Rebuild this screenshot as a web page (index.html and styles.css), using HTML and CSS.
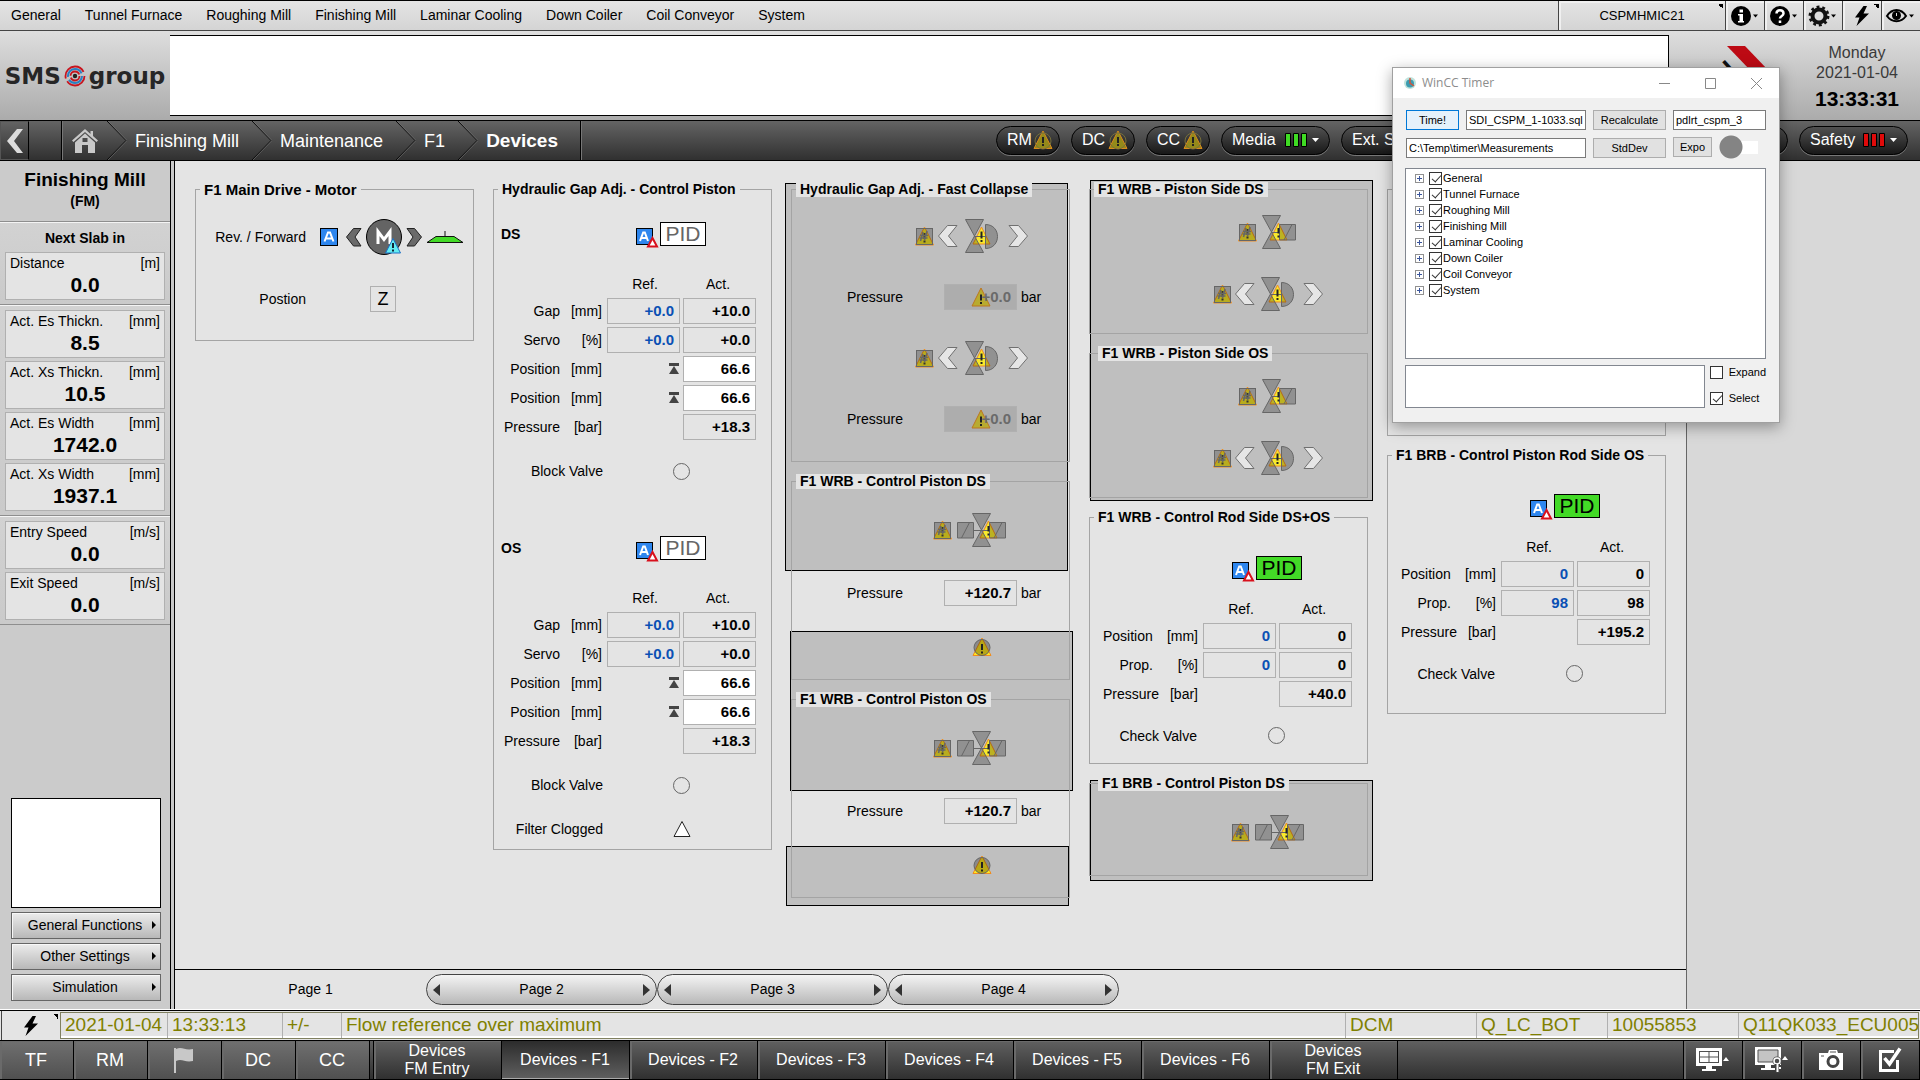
FILE: index.html
```html
<!DOCTYPE html>
<html lang="en">
<head>
<meta charset="utf-8">
<title>Finishing Mill - F1 Devices</title>
<link rel="stylesheet" href="styles.css">
</head>
<body>
<svg class="defs" aria-hidden="true">
  <symbol id="auto" viewBox="0 0 18 18"><rect x=".5" y=".5" width="17" height="17" fill="#2e86ee" stroke="#000"/><path d="M4.5 13.5 8 4.5h2l3.500 9M6 10.500h6" fill="none" stroke="#fff" stroke-width="2"/></symbol>
  <symbol id="auto-limit" viewBox="0 0 24 30"><rect x=".5" y="9.500" width="16" height="16" fill="#2e86ee" stroke="#000"/><path d="M4 22 7.200 13.500h1.600L12 22M5.500 19h5" fill="none" stroke="#fff" stroke-width="2"/><path d="M16.500 19 21 27.500h-9z" fill="#fff" stroke="#d8101c" stroke-width="2"/></symbol>
  <symbol id="limit-top" viewBox="0 0 10 11"><path d="M0 0h10v3H0zM5 3l5 8H0z" fill="#444"/></symbol>
  <symbol id="lock" viewBox="0 0 19 20"><path d="M9.500 1 18.500 19H.5z" fill="#f2e327" stroke="#f08c1e"/><rect x="1.500" y="2.500" width="16" height="16" fill="#000" fill-opacity=".24" stroke="#666"/><path d="M9.500 7v6M9.500 14.500v2" stroke="#333" stroke-width="2"/><path d="M8 6 5.500 15M12 5 9.500 14M5 9.500h8M4.500 12h8" stroke="#666" stroke-width="1.500"/></symbol>
  <symbol id="chev-l" viewBox="0 0 20 22"><path d="M9.500.5h9.500L10.500 11l8.500 10.500H9.500L.5 11z" fill="#e6e6e6" stroke="#707070"/></symbol>
  <symbol id="chev-r" viewBox="0 0 20 22"><path d="M10.500.5H1L9.500 11 1 21.500h9.500l9-10.500z" fill="#e6e6e6" stroke="#707070"/></symbol>
  <symbol id="valve-d" viewBox="0 0 34 34"><path d="M16.500 8 25 25H8z" fill="#f8ea2c" stroke="#f08c1e"/><path d="M.5.5h18l-9 16.500 9 16.500H.5l9-16.500zM20.500 5.500c16 0 16 24 0 24z" fill="#000" fill-opacity=".24" stroke="#666"/><path d="M9.500 17.500h11" stroke="#666"/><path d="M16.500 12.500v7M16.500 21v2" stroke="#222" stroke-width="2"/></symbol>
  <symbol id="valve-b" viewBox="0 0 34 34"><path d="M16.500 8 25 25H8z" fill="#f8ea2c" stroke="#f08c1e"/><path d="M.5.5h18l-9 16.500 9 16.500H.5l9-16.500zM17.500 9.500h16v15.500h-16z" fill="#000" fill-opacity=".24" stroke="#666"/><path d="M9.500 17.500h8M22 25l8-15.500" stroke="#666" fill="none"/><path d="M16.500 13v5.500M16.500 20.500v2" stroke="#222" stroke-width="2"/></symbol>
  <symbol id="valve-x" viewBox="0 0 49 34"><path d="M31.500 8 40 25H23z" fill="#f8ea2c" stroke="#f08c1e"/><path d="M15.500.5h18l-9 16.500 9 16.500h-18l9-16.500zM.5 9.500h16v15.500H.5zM32.500 9.500h16v15.500h-16z" fill="#000" fill-opacity=".24" stroke="#666"/><path d="M16.500 17.500h16M4.500 25l8-15.500M37 25l8-15.500" stroke="#666" fill="none"/><path d="M31.500 13v5.500M31.500 20.500v2" stroke="#222" stroke-width="2"/></symbol>
  <symbol id="warn-c" viewBox="0 0 20 20"><path d="M10 1 19 18.500H1z" fill="#ffe81f" stroke="#f08c1e"/><circle cx="10" cy="10.500" r="8" fill="#000" fill-opacity=".28" stroke="#666"/><path d="M10 7v6M10 14.500v2" stroke="#222" stroke-width="2"/></symbol>
  <symbol id="warn" viewBox="0 0 20 20"><path d="M10 1 19 19H1z" fill="#b8ab30" stroke="#bd7620"/><path d="M10 7.500v6M10 15v2" stroke="#222" stroke-width="2"/></symbol>
  <symbol id="warn-nav" viewBox="0 0 20 20"><path d="M10 1 19 18.500H1z" fill="#948a1a" stroke="#d98a1c"/><circle cx="10" cy="11" r="8" fill="none" stroke="#776f3a"/><path d="M10 7v6M10 14v2" stroke="#222" stroke-width="2"/></symbol>
  <symbol id="sep" viewBox="0 0 20 39"><path d="M0 0 19 19.500 0 39" fill="none" stroke="#0a0a0a"/><path d="M1 0 20 19.500 1 39" fill="none" stroke="#777" stroke-width=".6"/></symbol>
  <symbol id="bolt" viewBox="0 0 16 20"><path d="M9.500 0 1 11.500h4.500L2.500 20 15 7.500H9.500L13 0z" fill="#000"/></symbol>
</svg>

<div class="app">
  <header class="menubar">
    <nav class="menu">
      <a href="#">General</a><a href="#">Tunnel Furnace</a><a href="#">Roughing Mill</a><a href="#">Finishing Mill</a><a href="#">Laminar Cooling</a><a href="#">Down Coiler</a><a href="#">Coil Conveyor</a><a href="#">System</a>
    </nav>
    <button class="tool tool--host corner">CSPMHMIC21</button>
    <button class="tool" aria-label="Info"><svg width="30" height="22" viewBox="0 0 30 22"><circle cx="11" cy="11" r="10"/><path d="M8 9h5v7h1v1.500H8V16h1.500v-5.500H8zM9.500 4.500h3.500v3H9.500z" fill="#fff"/><path d="M23 9.500h5l-2.500 3z"/></svg></button>
    <button class="tool" aria-label="Help"><svg width="30" height="22" viewBox="0 0 30 22"><circle cx="11" cy="11" r="10"/><path d="M7.500 8.500c0-4.500 7-4.500 7 0 0 2.500-3.500 2.500-3.500 5M11 15.500v2.500" fill="none" stroke="#fff" stroke-width="2.500"/><path d="M23 9.500h5l-2.500 3z"/></svg></button>
    <button class="tool" aria-label="Settings"><svg width="30" height="22" viewBox="0 0 30 22"><circle cx="11" cy="11" r="6.500" fill="#ddd" stroke="#111" stroke-width="4"/><circle cx="11" cy="11" r="9.200" fill="none" stroke="#111" stroke-width="2.500" stroke-dasharray="2.900 2.900"/><path d="M23 9.500h5l-2.500 3z"/></svg></button>
    <button class="tool corner" aria-label="Alarms"><svg width="16" height="20"><use href="#bolt"/></svg></button>
    <button class="tool" aria-label="View"><svg width="30" height="22" viewBox="0 0 30 22"><path d="M1 11c5-8 14-8 19 0-5 7-14 7-19 0z" fill="#ddd" stroke="#000" stroke-width="2"/><circle cx="10.500" cy="10.500" r="4.500"/><path d="M10.500 8v3" stroke="#ddd"/><path d="M23 9.500h5l-2.500 3z"/></svg></button>
  </header>

  <div class="banner">
    <div class="logo"><span>SMS</span><svg width="22" height="22" viewBox="0 0 22 22" fill="none"><circle cx="11" cy="11" r="9.500" stroke="#c8141e" stroke-width="1.800" stroke-dasharray="24 3 28 4.700"/><circle cx="11" cy="11" r="7" stroke="#2b7fc2" stroke-width="2" stroke-dasharray="18 3 20 3"/><circle cx="11" cy="11" r="4.500" stroke="#c8141e" stroke-width="1.800" stroke-dasharray="12 2 12 2"/><circle cx="11" cy="11" r="2.200" fill="#222"/></svg><span>group</span></div>
    <div class="message"></div>
    <div class="brand"><svg width="60" height="64" viewBox="0 0 60 64"><path d="M18 1h18l23 24H41z" fill="#bd0a14"/><text x="-14" y="40" transform="rotate(-42 10 30)" font-family="Liberation Sans, sans-serif" font-weight="700" font-size="25" fill="#111">DnI</text></svg></div>
    <div class="clock"><span>Monday</span><span>2021-01-04</span><strong>13:33:31</strong></div>
  </div>

  <div class="pathbar">
    <button class="back" aria-label="Back"><svg width="20" height="26" viewBox="0 0 20 26"><path d="M12 1h6L9 13l9 12h-6L2 13z" fill="#dcdcdc"/></svg></button>
    <span class="spare"></span>
    <nav class="crumbs">
      <a class="home" href="#" aria-label="Home"><svg width="26" height="26" viewBox="0 0 26 26" fill="#c9c9c9"><path d="M13 1 0 12.500 1.500 14 13 4l11.500 10L26 12.500 21 8V3h-2.500v3z"/><path d="M13 5.500 3 14.500V25h7v-8h6v8h7V14.500z"/><path d="M10.500 10h5v4h-5z" fill="#4a4a4a"/></svg></a>
      <svg width="20" height="39"><use href="#sep"/></svg><a href="#">Finishing Mill</a>
      <svg width="20" height="39"><use href="#sep"/></svg><a href="#">Maintenance</a>
      <svg width="20" height="39"><use href="#sep"/></svg><a href="#">F1</a>
      <svg width="20" height="39"><use href="#sep"/></svg><a class="here" href="#">Devices</a>
    </nav>
    <div class="pills">
      <button class="pill">RM<svg width="20" height="20"><use href="#warn-nav"/></svg></button>
      <button class="pill">DC<svg width="20" height="20"><use href="#warn-nav"/></svg></button>
      <button class="pill">CC<svg width="20" height="20"><use href="#warn-nav"/></svg></button>
      <button class="pill pill--wide">Media<svg width="34" height="14" viewBox="0 0 34 14"><g fill="#3fdc23" stroke="#000"><path d="M.5.500h5v13h-5zM8.500.500h5v13h-5zM16.500.500h5v13h-5z"/></g><path d="M27 5h7l-3.500 4z" fill="#fff"/></svg></button>
      <button class="pill pill--long">Ext. Systems</button>
      <button class="pill pill--wide">Safety<svg width="34" height="14" viewBox="0 0 34 14"><g fill="#e00a0a" stroke="#000"><path d="M.5.500h5v13h-5zM8.500.500h5v13h-5zM16.500.500h5v13h-5z"/></g><path d="M27 5h7l-3.500 4z" fill="#fff"/></svg></button>
    </div>
  </div>

  <div class="body">
    <aside class="side">
      <div class="side-title"><h1>Finishing Mill</h1><p>(FM)</p></div>
      <div class="side-sec"><h2>Next Slab in</h2>
        <div class="fig"><span>Distance</span><span>[m]</span><strong>0.0</strong></div>
      </div>
      <div class="side-sec">
        <div class="fig"><span>Act. Es Thickn.</span><span>[mm]</span><strong>8.5</strong></div>
        <div class="fig"><span>Act. Xs Thickn.</span><span>[mm]</span><strong>10.5</strong></div>
        <div class="fig"><span>Act. Es Width</span><span>[mm]</span><strong>1742.0</strong></div>
        <div class="fig"><span>Act. Xs Width</span><span>[mm]</span><strong>1937.1</strong></div>
      </div>
      <div class="side-sec">
        <div class="fig"><span>Entry Speed</span><span>[m/s]</span><strong>0.0</strong></div>
        <div class="fig"><span>Exit Speed</span><span>[m/s]</span><strong>0.0</strong></div>
      </div>
      <div class="side-foot">
        <div class="preview"></div>
        <button class="side-btn">General Functions</button>
        <button class="side-btn">Other Settings</button>
        <button class="side-btn">Simulation</button>
      </div>
    </aside>

    <main class="main">
      <div class="columns">
        <div class="col">
          <section class="group group--motor">
            <h2 class="big">F1 Main Drive - Motor</h2>
            <div class="motor-row"><span class="motor-label">Rev. / Forward</span>
              <svg width="18" height="18"><use href="#auto"/></svg>
              <svg width="80" height="38" viewBox="0 0 80 38"><path d="M9.500 10.500H17L11 19l6 9H9.500L2.500 19zM70.500 10.500H63L69 19l-6 9h7.500L77.500 19z" fill="#6a6a6a" stroke="#222"/><circle cx="40" cy="19" r="17.500" fill="#646464" stroke="#000"/><path d="M34 26V13.500l6 8 6-8V26" fill="none" stroke="#fff" stroke-width="3"/><path d="M49 20.500 56.500 35h-15z" fill="#63ecf2" stroke="#1c6fc4"/><path d="M49 25v5M49 31.500v2" stroke="#123" stroke-width="2"/></svg>
              <svg width="38" height="14" viewBox="0 0 38 14"><path d="M1 12.500 10 6.500h18l9 6z" fill="#43da27" stroke="#111"/><path d="M19 1v6" stroke="#111"/></svg>
            </div>
            <div class="motor-row motor-row--pos"><span class="motor-label">Postion</span><output class="zbox">Z</output></div>
          </section>
        </div>

        <div class="col">
          <section class="group group--gap">
            <h2>Hydraulic Gap Adj. - Control Piston</h2>
            <div class="pid-row"><strong>DS</strong><svg width="24" height="30"><use href="#auto-limit"/></svg><button class="pid">PID</button></div>
            <table class="vals">
              <tr><th></th><th></th><th>Ref.</th><th>Act.</th></tr>
              <tr><td>Gap</td><td>[mm]</td><td><output class="val ref">+0.0</output></td><td><output class="val">+10.0</output></td></tr>
              <tr><td>Servo</td><td>[%]</td><td><output class="val ref">+0.0</output></td><td><output class="val">+0.0</output></td></tr>
              <tr><td>Position</td><td>[mm]</td><td><svg width="10" height="11"><use href="#limit-top"/></svg></td><td><output class="val lit">66.6</output></td></tr>
              <tr><td>Position</td><td>[mm]</td><td><svg width="10" height="11"><use href="#limit-top"/></svg></td><td><output class="val lit">66.6</output></td></tr>
              <tr><td>Pressure</td><td>[bar]</td><td></td><td><output class="val">+18.3</output></td></tr>
            </table>
            <div class="state"><span>Block Valve</span><i class="lamp"></i></div>
            <div class="pid-row pid-row--next"><strong>OS</strong><svg width="24" height="30"><use href="#auto-limit"/></svg><button class="pid">PID</button></div>
            <table class="vals">
              <tr><th></th><th></th><th>Ref.</th><th>Act.</th></tr>
              <tr><td>Gap</td><td>[mm]</td><td><output class="val ref">+0.0</output></td><td><output class="val">+10.0</output></td></tr>
              <tr><td>Servo</td><td>[%]</td><td><output class="val ref">+0.0</output></td><td><output class="val">+0.0</output></td></tr>
              <tr><td>Position</td><td>[mm]</td><td><svg width="10" height="11"><use href="#limit-top"/></svg></td><td><output class="val lit">66.6</output></td></tr>
              <tr><td>Position</td><td>[mm]</td><td><svg width="10" height="11"><use href="#limit-top"/></svg></td><td><output class="val lit">66.6</output></td></tr>
              <tr><td>Pressure</td><td>[bar]</td><td></td><td><output class="val">+18.3</output></td></tr>
            </table>
            <div class="state"><span>Block Valve</span><i class="lamp"></i></div>
            <div class="state state--filter"><span>Filter Clogged</span><svg width="18" height="18" viewBox="0 0 18 18"><path d="M9 1.500 17 16.500H1z" fill="#fff" stroke="#222"/></svg></div>
          </section>
        </div>

        <div class="col">
          <div class="shade shade--collapse"></div><div class="shade shade--mid"></div><div class="shade shade--low"></div>
          <section class="group group--collapse">
            <h2>Hydraulic Gap Adj. - Fast Collapse</h2>
            <div class="dev dev--fast"><svg width="19" height="20"><use href="#lock"/></svg><svg width="20" height="22"><use href="#chev-l"/></svg><svg class="body-d" width="34" height="34"><use href="#valve-d"/></svg><svg width="20" height="22"><use href="#chev-r"/></svg></div>
            <div class="press"><span>Pressure</span><output class="val off"><svg width="20" height="20"><use href="#warn"/></svg>+0.0</output><span>bar</span></div>
            <div class="dev dev--fast"><svg width="19" height="20"><use href="#lock"/></svg><svg width="20" height="22"><use href="#chev-l"/></svg><svg class="body-d" width="34" height="34"><use href="#valve-d"/></svg><svg width="20" height="22"><use href="#chev-r"/></svg></div>
            <div class="press"><span>Pressure</span><output class="val off"><svg width="20" height="20"><use href="#warn"/></svg>+0.0</output><span>bar</span></div>
          </section>
          <section class="group">
            <h2>F1 WRB - Control Piston DS</h2>
            <div class="dev dev--cross"><svg width="19" height="20"><use href="#lock"/></svg><svg width="49" height="34"><use href="#valve-x"/></svg></div>
            <div class="press"><span>Pressure</span><output class="val">+120.7</output><span>bar</span></div>
            <div class="dev dev--warn"><svg width="20" height="20"><use href="#warn-c"/></svg></div>
          </section>
          <section class="group">
            <h2>F1 WRB - Control Piston OS</h2>
            <div class="dev dev--cross"><svg width="19" height="20"><use href="#lock"/></svg><svg width="49" height="34"><use href="#valve-x"/></svg></div>
            <div class="press"><span>Pressure</span><output class="val">+120.7</output><span>bar</span></div>
            <div class="dev dev--warn"><svg width="20" height="20"><use href="#warn-c"/></svg></div>
          </section>
        </div>

        <div class="col">
          <div class="shade shade--piston"></div><div class="shade shade--brb"></div>
          <section class="group group--pair">
            <h2>F1 WRB - Piston Side DS</h2>
            <div class="dev dev--box"><svg width="19" height="20"><use href="#lock"/></svg><svg width="34" height="34"><use href="#valve-b"/></svg></div>
            <div class="dev dev--arrows"><svg width="19" height="20"><use href="#lock"/></svg><svg width="20" height="22"><use href="#chev-l"/></svg><svg class="body-d" width="34" height="34"><use href="#valve-d"/></svg><svg width="20" height="22"><use href="#chev-r"/></svg></div>
          </section>
          <section class="group group--pair">
            <h2 class="inset">F1 WRB - Piston Side OS</h2>
            <div class="dev dev--box"><svg width="19" height="20"><use href="#lock"/></svg><svg width="34" height="34"><use href="#valve-b"/></svg></div>
            <div class="dev dev--arrows"><svg width="19" height="20"><use href="#lock"/></svg><svg width="20" height="22"><use href="#chev-l"/></svg><svg class="body-d" width="34" height="34"><use href="#valve-d"/></svg><svg width="20" height="22"><use href="#chev-r"/></svg></div>
          </section>
          <section class="group">
            <h2>F1 WRB - Control Rod Side DS+OS</h2>
            <div class="pid-row pid-row--low"><strong></strong><svg width="24" height="30"><use href="#auto-limit"/></svg><button class="pid pid--on">PID</button></div>
            <table class="vals vals--left">
              <tr><th></th><th></th><th>Ref.</th><th>Act.</th></tr>
              <tr><td>Position</td><td>[mm]</td><td><output class="val ref">0</output></td><td><output class="val">0</output></td></tr>
              <tr><td class="end">Prop.</td><td>[%]</td><td><output class="val ref">0</output></td><td><output class="val">0</output></td></tr>
              <tr><td>Pressure</td><td>[bar]</td><td></td><td><output class="val">+40.0</output></td></tr>
            </table>
            <div class="state state--check"><span>Check Valve</span><i class="lamp"></i></div>
          </section>
          <section class="group group--brb">
            <h2 class="inset">F1 BRB - Control Piston DS</h2>
            <div class="dev dev--cross"><svg width="19" height="20"><use href="#lock"/></svg><svg width="49" height="34"><use href="#valve-x"/></svg></div>
          </section>
        </div>

        <div class="col">
          <section class="group group--covered"></section>
          <section class="group group--rod">
            <h2>F1 BRB - Control Piston Rod Side OS</h2>
            <div class="pid-row pid-row--low"><strong></strong><svg width="24" height="30"><use href="#auto-limit"/></svg><button class="pid pid--on">PID</button></div>
            <table class="vals vals--left">
              <tr><th></th><th></th><th>Ref.</th><th>Act.</th></tr>
              <tr><td>Position</td><td>[mm]</td><td><output class="val ref">0</output></td><td><output class="val">0</output></td></tr>
              <tr><td class="end">Prop.</td><td>[%]</td><td><output class="val ref">98</output></td><td><output class="val">98</output></td></tr>
              <tr><td>Pressure</td><td>[bar]</td><td></td><td><output class="val">+195.2</output></td></tr>
            </table>
            <div class="state state--check"><span>Check Valve</span><i class="lamp"></i></div>
          </section>
        </div>
      </div>

      <nav class="pager">
        <span class="page">Page 1</span>
        <button class="page page--btn">Page 2</button>
        <button class="page page--btn">Page 3</button>
        <button class="page page--btn">Page 4</button>
      </nav>
    </main>
    <div class="gutter"></div>
  </div>

  <div class="alarm">
    <button class="alarm-btn corner" aria-label="Alarm list"><svg width="16" height="20"><use href="#bolt"/></svg></button>
    <div class="alarm-line">
      <span class="a-date">2021-01-04</span><span class="a-time">13:33:13</span><span class="a-sign">+/-</span><span class="a-text">Flow reference over maximum</span><span class="a-col">DCM</span><span class="a-col">Q_LC_BOT</span><span class="a-col">10055853</span><span class="a-last">Q11QK033_ECU005</span>
    </div>
  </div>

  <nav class="taskbar">
    <div class="areas">
      <button class="task">TF</button><button class="task">RM</button>
      <button class="task" aria-label="Finishing Mill"><svg width="22" height="26" viewBox="0 0 22 26" fill="#c8c8c8"><path d="M1 1h2v25H1zM3 2c6-3 9 2 17 0v12c-8 2-11-3-17 0z"/></svg></button>
      <button class="task">DC</button><button class="task">CC</button>
    </div>
    <div class="pages">
      <button class="task">Devices<br>FM Entry</button>
      <button class="task task--on">Devices - F1</button>
      <button class="task">Devices - F2</button>
      <button class="task">Devices - F3</button>
      <button class="task">Devices - F4</button>
      <button class="task">Devices - F5</button>
      <button class="task">Devices - F6</button>
      <button class="task">Devices<br>FM Exit</button>
    </div>
    <div class="tools">
      <button class="task" aria-label="Screens"><svg width="34" height="24" viewBox="0 0 34 24" fill="#fff"><path d="M0 0h26v18H16v3h4v2H6v-2h4v-3H0z"/><path d="M3 3h20v12H3z" fill="#505050"/><path d="M4 4h8.500v4.500H4zM13.500 4H22v4.500h-8.500zM4 9.500h8.500V14H4zM13.500 9.500H22V14h-8.500zM27 13h6l-3-4z"/></svg></button>
      <button class="task" aria-label="Screen access"><svg width="34" height="26" viewBox="0 0 34 26" fill="#fff"><path d="M0 0h26v18H16v3h4v2H6v-2h4v-3H0z"/><path d="M3 3h20v12H3z" fill="#c4c4c4" stroke="#505050"/><circle cx="22" cy="14" r="4.500" fill="#505050"/><circle cx="22" cy="14" r="3" fill="#505050" stroke="#fff" stroke-width="1.500"/><path d="M20 17h5v9h-4z" fill="#404040"/><path d="M21.500 17h2v8h-2zM24 20h2v2h-2zM27 13h6l-3-4z"/></svg></button>
      <button class="task" aria-label="Snapshot"><svg width="26" height="22" viewBox="0 0 26 22"><path d="M1 4h9l1-3h8l1 3h5v17H1z" fill="#fff"/><path d="M12 3h6M3 7h3" stroke="#505050"/><circle cx="15" cy="12.500" r="5" fill="#fff" stroke="#444" stroke-width="3"/></svg></button>
      <button class="task" aria-label="Confirm"><svg width="26" height="26" viewBox="0 0 26 26" fill="none" stroke="#fff"><path d="M17 4.500H3.500v19h17V13" stroke-width="3"/><path d="M7.500 11l5 6L23 1.500" stroke-width="3.500"/></svg></button>
    </div>
  </nav>
</div>

<div class="window" role="dialog" aria-label="WinCC Timer">
  <div class="titlebar">
    <svg width="14" height="14" viewBox="0 0 14 14"><circle cx="7" cy="7" r="6" fill="#bfe3dc"/><circle cx="7" cy="7.500" r="4" fill="#3c9bb0"/><path d="M7 2v5l4 3" stroke="#d0563c" fill="none" stroke-width="1.500"/></svg>
    <span class="wtitle">WinCC Timer</span>
    <button aria-label="Minimize"><svg width="11" height="11" viewBox="0 0 11 11"><path d="M0 5.500h11" stroke="#888"/></svg></button>
    <button aria-label="Maximize"><svg width="11" height="11" viewBox="0 0 11 11"><path d="M.5.5h10v10H.5z" fill="none" stroke="#888"/></svg></button>
    <button aria-label="Close"><svg width="11" height="11" viewBox="0 0 11 11"><path d="M0 0l11 11M11 0 0 11" stroke="#888"/></svg></button>
  </div>
  <div class="wbody">
    <div class="form">
      <button class="btn btn--focus">Time!</button>
      <input type="text" aria-label="Script" value="SDI_CSPM_1-1033.sql">
      <button class="btn">Recalculate</button>
      <input type="text" aria-label="Project" value="pdlrt_cspm_3">
      <input class="path" type="text" aria-label="Folder" value="C:\Temp\timer\Measurements">
      <button class="btn">StdDev</button>
      <div class="expo"><button class="btn">Expo</button><input class="toggle" type="checkbox" aria-label="Run"></div>
    </div>
    <ul class="tree">
      <li><i class="plus"></i><label><input type="checkbox" checked>General</label></li>
      <li><i class="plus"></i><label><input type="checkbox" checked>Tunnel Furnace</label></li>
      <li><i class="plus"></i><label><input type="checkbox" checked>Roughing Mill</label></li>
      <li><i class="plus"></i><label><input type="checkbox" checked>Finishing Mill</label></li>
      <li><i class="plus"></i><label><input type="checkbox" checked>Laminar Cooling</label></li>
      <li><i class="plus"></i><label><input type="checkbox" checked>Down Coiler</label></li>
      <li><i class="plus"></i><label><input type="checkbox" checked>Coil Conveyor</label></li>
      <li><i class="plus"></i><label><input type="checkbox" checked>System</label></li>
    </ul>
    <div class="wfoot">
      <textarea aria-label="Log"></textarea>
      <div class="opts"><label><input type="checkbox">Expand</label><label><input type="checkbox" checked>Select</label></div>
    </div>
  </div>
</div>
</body>
</html>
```
FILE: styles.css
```css
* { box-sizing: border-box; }
body { margin: 0; font: 14px/16px "Liberation Sans", Arial, sans-serif; color: #000; background: #d8d8d8; }
h1, h2, p { margin: 0; }
a { color: inherit; text-decoration: none; }
button { font: inherit; color: inherit; margin: 0; padding: 0; border: 0; background: none; }
svg { display: block; flex: none; overflow: visible; }
.defs { position: absolute; width: 0; height: 0; }
.app { display: flex; flex-direction: column; min-height: 100vh; overflow: hidden; }

/* small triangle in a button's upper right corner */
.corner { background-image: linear-gradient(45deg, transparent 50%, #000 50%); background-repeat: no-repeat; background-size: 5px 5px; background-position: right 2px top 3px; }

.menubar { display: flex; height: 31px; border-top: 1px solid #000; border-bottom: 1px solid #444; background: linear-gradient(#e4e4e4, #d4d4d4); }
.menu { display: flex; flex: 1; gap: 24px; align-items: center; padding: 0 0 2px 11px; white-space: nowrap; }
.tool { display: flex; align-items: center; justify-content: center; width: 39px; border-left: 1px solid #444; box-shadow: inset 2px 2px #f0f0f0; }
.tool--host { width: 167px; font-size: 13px; }

.banner { display: flex; height: 89px; padding: 4px 0; background: linear-gradient(#dedede, #ababab); }
.logo { display: flex; align-items: center; justify-content: center; width: 170px; gap: 3px; font: bold 23px/24px "DejaVu Sans", sans-serif; color: #262626; }
.message { flex: 1; border: 1px solid #000; border-left: 0; background: #fff; }
.brand { width: 125px; padding: 10px 0 0 40px; }
.clock { display: flex; flex-direction: column; align-items: center; width: 126px; padding-top: 8px; font-size: 16px; line-height: 20px; color: #3a3a3a; }
.clock strong { margin-top: 4px; font-size: 21px; line-height: 24px; color: #000; }

.pathbar { display: flex; height: 41px; border: solid #000; border-width: 1px 0; background: linear-gradient(#646464, #303030); color: #fff; font-size: 18px; white-space: nowrap; }
.back { display: flex; align-items: center; justify-content: center; width: 29px; border: 1px solid #555; border-right-color: #000; }
.spare { width: 33px; border-right: 1px solid #000; box-shadow: 1px 0 #777; }
.crumbs { display: flex; align-items: center; border-right: 1px solid #000; box-shadow: 1px 0 #777; }
.crumbs a { padding: 0 13px 0 8px; }
.crumbs .home { padding: 0 9px 0 10px; }
.crumbs .here { padding-right: 22px; font-size: 19px; font-weight: bold; }
.pills { display: flex; align-items: center; gap: 11px; margin-left: auto; padding-right: 12px; font-size: 16px; }
.pill { display: flex; align-items: center; justify-content: space-between; width: 64px; height: 29px; padding: 0 6px 2px 10px; border: 1px solid #000; border-radius: 15px; box-shadow: 0 1px #777; background: linear-gradient(#505050, #181818); }
.pill--wide { width: 109px; padding-right: 10px; }
.pill--long { width: 447px; }

.body { display: flex; flex: 1; }
.side { display: flex; flex-direction: column; width: 175px; border-right: 1px solid #000; background: #cbcbcb; box-shadow: inset -3px 0 #c8c8c8, inset -4px 0 #000; padding-right: 4px; }
.side-title { height: 61px; padding-top: 8px; border-bottom: 1px solid #8e8e8e; text-align: center; font-weight: bold; }
.side-title h1 { font-size: 19px; line-height: 22px; }
.side-title p { line-height: 20px; }
.side-sec { display: flex; flex-direction: column; gap: 3px; padding: 4px 5px; border-top: 1px solid #f4f4f4; border-bottom: 1px solid #8e8e8e; background: linear-gradient(#d2d2d2, #cacaca); }
.side-sec h2 { padding: 3px 0; font-size: 14px; line-height: 16px; text-align: center; }
.fig { display: grid; grid-template-columns: 1fr auto; height: 48px; padding: 1px 4px; border: 1px solid #b0b0b0; background: #e4e4e4; line-height: 18px; }
.fig strong { grid-column: 1 / 3; font-size: 21px; line-height: 24px; text-align: center; }
.side-foot { display: flex; flex-direction: column; gap: 4px; margin-top: auto; padding: 0 9px 8px 11px; }
.preview { height: 110px; border: 1px solid #000; background: #fff; }
.side-btn { position: relative; height: 27px; padding: 0 2px 2px 0; border: 1px solid #666; background: linear-gradient(#ececec, #b8b8b8); box-shadow: inset 1px 1px #f8f8f8; }
.side-btn::after { content: ""; position: absolute; right: 4px; top: 8px; border: solid transparent; border-width: 4px 0 4px 4px; border-left-color: #000; }

.main { display: flex; flex-direction: column; flex: 1; border-right: 1px solid #666; background: #e4e4e4; }
.gutter { width: 233px; background: #d8d8d8; }
.columns { display: grid; grid-template-columns: repeat(5, minmax(0, 1fr)); gap: 19px; flex: 1; padding: 28px 20px 20px; }
.col { position: relative; z-index: 0; display: flex; flex-direction: column; gap: 19px; }
.group { border: 1px solid #a4a4a4; }
.group > h2 { width: fit-content; margin: -8px 0 0 4px; padding: 0 4px; background: #e4e4e4; font-size: 14px; line-height: 15px; white-space: nowrap; }
.group > h2.inset { margin-left: 8px; }
.group > h2.big { font-size: 15px; }
.group--motor { padding-bottom: 19px; }
.group--gap { padding-bottom: 6px; }
.group--collapse { padding-bottom: 20px; }
.group--pair, .group--rod { padding-bottom: 12px; }
.group--brb { padding-bottom: 2px; }
.group--covered { min-height: 247px; }

/* backing of device groups whose signals are not valid */
.shade { position: absolute; z-index: -1; width: 283px; border: 1px solid #000; background: #bfbfbf; }
.shade--collapse { left: -6px; top: -6px; height: 388px; }
.shade--mid { left: -1px; top: 442px; height: 160px; }
.shade--low { left: -5px; top: 657px; height: 60px; }
.shade--piston { left: 1px; top: -9px; height: 321px; }
.shade--brb { left: 1px; top: 591px; height: 101px; }

.motor-row { display: flex; align-items: center; height: 80px; }
.motor-row--pos { height: 44px; }
.motor-label { width: 110px; margin-right: 14px; text-align: right; }
.motor-row > svg + svg { margin-left: 6px; }
.motor-row > svg:last-child { margin-left: 2px; }
.zbox { width: 26px; height: 26px; margin-left: 50px; border: 1px solid #b0b0b0; font-size: 18px; line-height: 24px; text-align: center; }

.pid-row { display: flex; align-items: center; height: 74px; }
.pid-row strong { width: 142px; padding-left: 7px; }
.pid-row--next { margin-top: 10px; }
.pid-row--low { height: 71px; padding-top: 14px; }
.pid { width: 46px; height: 24px; border: 1px solid #000; background: #fff; color: #666; font-size: 21px; line-height: 22px; }
.pid--on { background: #43da27; color: #000; }

.vals { width: 262px; table-layout: fixed; border-collapse: collapse; }
.vals th { height: 25px; padding: 0; font-weight: normal; }
.vals th:nth-child(1) { width: 66px; }
.vals th:nth-child(2) { width: 42px; }
.vals th:nth-child(3) { width: 78px; padding-left: 8px; }
.vals td { height: 29px; padding: 0; text-align: right; white-space: nowrap; }
.vals--left td:first-child { padding-left: 13px; text-align: left; }
.vals--left td.end { padding-right: 3px; text-align: right; }
.vals svg { margin-left: auto; margin-right: 1px; }
.val { display: block; width: 73px; height: 26px; margin-left: auto; padding-right: 5px; border: 1px solid #b0b0b0; font-size: 15px; font-weight: bold; line-height: 24px; text-align: right; }
.val.ref { color: #0a50b4; }
.val.lit { background: #fff; }
.val.off { position: relative; z-index: 0; background: #adadad; color: #6a6a6a; }
.val.off svg { position: absolute; left: 26px; top: 2px; z-index: -1; }

.state { display: flex; align-items: center; height: 60px; }
.state span { width: 109px; margin-right: 70px; text-align: right; }
.state--filter { height: 28px; }
.state--check { height: 55px; }
.state--check span { width: 107px; margin-right: 71px; }
.lamp { width: 17px; height: 17px; border: 1px solid #666; border-radius: 50%; }

.dev { display: flex; align-items: center; }
.dev--fast { height: 78px; gap: 4px; padding-left: 123px; }
.dev--arrows { height: 54px; gap: 3px; padding-left: 123px; }
.body-d { margin: 0 5px 0 3px; }
.dev--box { height: 70px; gap: 5px; padding-left: 148px; }
.dev--cross { height: 82px; gap: 5px; padding-left: 141px; }
.dev--warn { height: 64px; padding-left: 180px; }
.press { display: flex; align-items: center; height: 44px; }
.press span:first-child { width: 111px; text-align: right; }
.press .val { margin: 0 4px 0 41px; }

.pager { display: flex; height: 40px; padding: 4px 20px 0; border-top: 1px solid #000; }
.page { width: 231px; height: 31px; line-height: 31px; text-align: center; }
.page--btn { display: flex; align-items: center; justify-content: space-between; padding: 0 6px; border: 1px solid #444; border-radius: 16px; background: linear-gradient(#f4f4f4, #b8b8b8); }
.page--btn::before, .page--btn::after { content: ""; border: solid transparent; border-width: 6px 0; }
.page--btn::before { border-right: 7px solid #333; }
.page--btn::after { border-left: 7px solid #333; }

.alarm { display: flex; height: 31px; border-top: 1px solid #fff; background: #e4e4e4; box-shadow: inset 0 1px #000; padding: 1px 1px 0 1px; }
.alarm-btn { display: flex; align-items: center; justify-content: center; width: 59px; border-left: 1px solid #444; }
.alarm-line { display: flex; flex: 1; min-width: 0; margin: 1px 0; border: 1px solid #808060; box-shadow: inset 0 -2px #fff; color: #808000; font-size: 19px; line-height: 24px; white-space: nowrap; overflow: hidden; }
.alarm-line span { flex: none; padding-left: 4px; border-right: 1px solid #b0b0b0; }
.a-date { width: 107px; }
.a-time { width: 115px; }
.a-sign { width: 59px; }
.alarm-line .a-text { flex: 1; }
.a-col { width: 131px; }
.alarm-line .a-last { width: 179px; overflow: hidden; border: 0; }

.taskbar { display: flex; height: 40px; border: solid #000; border-width: 1px 0; background: linear-gradient(#606060, #303030); color: #fff; font-size: 16px; line-height: 18px; }
.areas, .pages, .tools { display: flex; }
.areas { font-size: 18px; padding-right: 3px; border-right: 1px solid #000; }
.tools { margin-left: auto; border-left: 1px solid #000; }
.task { display: flex; align-items: center; justify-content: center; padding-right: 1px; text-align: center; border-right: 1px solid #000; box-shadow: inset 2px 1px #6a6a6a; }
.areas .task { width: 74px; background: linear-gradient(#707070, #505050); }
.pages .task { width: 128px; }
.tools .task { width: 59px; }
.pages .task--on { background: linear-gradient(#2c2c2c, #606060); box-shadow: inset 0 -1px #aaa; }

.window { position: absolute; left: 1392px; top: 67px; width: 388px; border: 1px solid #a0a0a0; background: #f0f0f0; box-shadow: 0 4px 14px rgba(0, 0, 0, .35); font-size: 11px; line-height: 14px; }
.titlebar { display: flex; align-items: center; height: 30px; padding-left: 10px; background: #fff; color: #8c8c8c; font: 12px/16px "Open Sans", sans-serif; }
.wtitle { flex: 1; padding-left: 5px; }
.titlebar button { display: grid; place-items: center; width: 46px; height: 30px; }
.wbody { padding: 12px 13px 14px 12px; }
.form { display: grid; grid-template-columns: 53px 1fr 73px 93px; grid-auto-rows: 20px; gap: 8px 7px; padding-left: 1px; }
.form .path { grid-column: span 2; }
.form input[type="text"] { min-width: 0; padding: 0 2px; border: 1px solid #7a7a7a; background: #fff; font: inherit; color: #000; }
.btn { border: 1px solid #adadad; background: #e1e1e1; }
.btn--focus { border-color: #0078d7; background: #e5f1fb; }
.expo { display: flex; gap: 7px; align-items: center; height: 18px; }
.expo .btn { width: 39px; height: 20px; }
.toggle { appearance: none; width: 40px; height: 24px; margin: 0; background: radial-gradient(circle at 12px 12px, #848484 11px, transparent 12px), linear-gradient(#fff, #fff) 12px 6px / 27px 13px no-repeat; }
.tree { height: 191px; margin: 10px 0 6px; padding: 1px 9px; border: 1px solid #828790; background: #fff; list-style: none; }
.tree li { display: flex; align-items: center; gap: 5px; height: 16px; }
.tree label { display: flex; align-items: center; gap: 1px; }
.plus { width: 9px; height: 9px; border: 1px solid #919191; background: linear-gradient(#3a559c, #3a559c) center / 5px 1px no-repeat, linear-gradient(#3a559c, #3a559c) center / 1px 5px no-repeat, #fff; }
.window label input { appearance: none; width: 13px; height: 13px; margin: 0; border: 1px solid #333; background: #fff; }
.window label input:checked::after { content: ""; display: block; width: 8px; height: 4px; margin: 2px 0 0 2px; border: solid #333; border-width: 0 0 1px 1px; transform: rotate(-48deg); }
.wfoot { display: flex; gap: 5px; }
.wfoot textarea { flex: 1; height: 43px; margin: 0; border: 1px solid #828790; background: #fff; resize: none; }
.opts { display: flex; flex-direction: column; gap: 12px; }
.opts label { display: flex; align-items: center; gap: 6px; }
```
